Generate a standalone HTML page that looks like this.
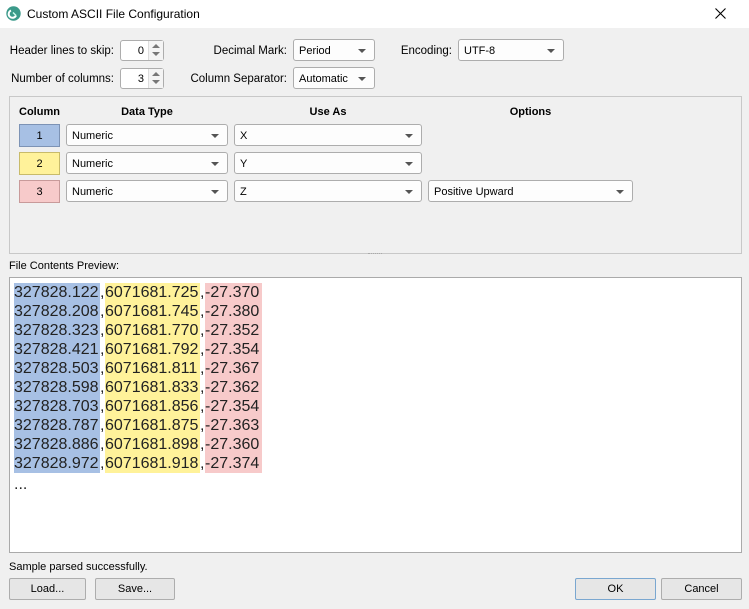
<!DOCTYPE html>
<html><head><meta charset="utf-8"><style>
*{box-sizing:border-box;margin:0;padding:0}
body{width:749px;height:609px;background:#f0f0f0;font-family:"Liberation Sans",sans-serif;font-size:11.5px;color:#000;position:relative;overflow:hidden}
.a{position:absolute}
.tb{left:0;top:0;width:749px;height:28px;background:#fff}
.lbl{position:absolute;white-space:nowrap;line-height:14px;font-size:11.5px}
.r{text-align:right}
.cb{position:absolute;height:22px;background:#fdfdfd;border:1px solid #adadad;border-radius:3px;padding-left:5px;line-height:22px;font-size:11px}
.cb:after{content:"";position:absolute;right:8px;top:9px;border-left:4px solid transparent;border-right:4px solid transparent;border-top:4px solid #555}
.sp{position:absolute;width:44px;height:21px;background:#fff;border:1px solid #adadad;border-radius:3px;text-align:right;padding-right:19px;line-height:20px;font-size:11px}
.sp i{position:absolute;right:0;top:0;width:15px;height:19px;border-left:1px solid #ddd;background:#f4f4f4}
.sp i:before{content:"";position:absolute;left:3px;top:3px;border-left:4px solid transparent;border-right:4px solid transparent;border-bottom:4px solid #777}
.sp i:after{content:"";position:absolute;left:3px;top:11px;border-left:4px solid transparent;border-right:4px solid transparent;border-top:4px solid #777}
.sw{position:absolute;left:19px;width:41px;height:23px;text-align:center;line-height:22px;font-size:11px}
.h{position:absolute;top:106px;font-weight:bold;font-size:11px;text-align:center}
.btn{position:absolute;top:578px;height:22px;background:#e6e6e6;border:1px solid #adadad;border-radius:2px;text-align:center;line-height:21px;font-size:11px}
.pv{font-size:16px;line-height:19px;color:#222;white-space:nowrap}
.pv span{display:inline-block}
.b{background:#a7c0e4;width:86px}
.y{background:#fff29a;width:95px}
.p{background:#f7caca;width:57px}
.c{width:5px}
</style></head><body>
<div class="a tb"></div>
<svg class="a" style="left:6px;top:6px" width="15" height="15" viewBox="0 0 15 15"><circle cx="7.5" cy="7.5" r="7.2" fill="#3b9a8a"/><path d="M5 4.5a3.8 3.8 0 1 0 5 5" stroke="#fff" stroke-width="2" fill="none"/><path d="M7 6.5l3 3" stroke="#cfe" stroke-width="1.4"/></svg>
<div class="lbl" style="left:27px;top:7px;font-size:12px">Custom ASCII File Configuration</div>
<svg class="a" style="left:715px;top:8px" width="11" height="11"><path d="M0.5 0.5l10 10M10.5 0.5l-10 10" stroke="#000" stroke-width="1.1"/></svg>

<div class="lbl r" style="right:635px;top:44px">Header lines to skip:</div>
<div class="sp" style="left:120px;top:40px">0<i></i></div>
<div class="lbl r" style="right:635px;top:72px">Number of columns:</div>
<div class="sp" style="left:120px;top:68px">3<i></i></div>
<div class="lbl r" style="right:462px;top:44px">Decimal Mark:</div>
<div class="cb" style="left:293px;top:39px;width:82px">Period</div>
<div class="lbl r" style="right:462px;top:72px">Column Separator:</div>
<div class="cb" style="left:293px;top:67px;width:82px">Automatic</div>
<div class="lbl r" style="right:297px;top:44px">Encoding:</div>
<div class="cb" style="left:458px;top:39px;width:106px">UTF-8</div>

<div class="a" style="left:9px;top:96px;width:733px;height:158px;border:1px solid #c8c8c8;background:#f0f0f0"></div>
<div class="h" style="left:14px;width:51px">Column</div>
<div class="h" style="left:66px;width:162px">Data Type</div>
<div class="h" style="left:234px;width:188px">Use As</div>
<div class="h" style="left:428px;width:205px">Options</div>

<div class="sw" style="top:124px;background:#a7c0e4;border:1px solid #7d93b5">1</div>
<div class="cb" style="left:66px;top:124px;width:162px">Numeric</div>
<div class="cb" style="left:234px;top:124px;width:188px">X</div>
<div class="sw" style="top:152px;background:#fff29a;border:1px solid #c8bb6a">2</div>
<div class="cb" style="left:66px;top:152px;width:162px">Numeric</div>
<div class="cb" style="left:234px;top:152px;width:188px">Y</div>
<div class="sw" style="top:180px;background:#f7caca;border:1px solid #c89a9a">3</div>
<div class="cb" style="left:66px;top:180px;width:162px">Numeric</div>
<div class="cb" style="left:234px;top:180px;width:188px">Z</div>
<div class="cb" style="left:428px;top:180px;width:205px">Positive Upward</div>
<div class="a" style="left:368px;top:253px;width:14px;height:1px;border-top:1px dotted #aaa"></div>

<div class="lbl" style="left:9px;top:259px;font-size:11px">File Contents Preview:</div>
<div class="a" style="left:9px;top:277px;width:733px;height:276px;background:#fff;border:1px solid #aaa"></div>
<div class="a pv" style="left:14px;top:283px">
<div><span class="b">327828.122</span><span class="c">,</span><span class="y">6071681.725</span><span class="c">,</span><span class="p">-27.370</span></div>
<div><span class="b">327828.208</span><span class="c">,</span><span class="y">6071681.745</span><span class="c">,</span><span class="p">-27.380</span></div>
<div><span class="b">327828.323</span><span class="c">,</span><span class="y">6071681.770</span><span class="c">,</span><span class="p">-27.352</span></div>
<div><span class="b">327828.421</span><span class="c">,</span><span class="y">6071681.792</span><span class="c">,</span><span class="p">-27.354</span></div>
<div><span class="b">327828.503</span><span class="c">,</span><span class="y">6071681.811</span><span class="c">,</span><span class="p">-27.367</span></div>
<div><span class="b">327828.598</span><span class="c">,</span><span class="y">6071681.833</span><span class="c">,</span><span class="p">-27.362</span></div>
<div><span class="b">327828.703</span><span class="c">,</span><span class="y">6071681.856</span><span class="c">,</span><span class="p">-27.354</span></div>
<div><span class="b">327828.787</span><span class="c">,</span><span class="y">6071681.875</span><span class="c">,</span><span class="p">-27.363</span></div>
<div><span class="b">327828.886</span><span class="c">,</span><span class="y">6071681.898</span><span class="c">,</span><span class="p">-27.360</span></div>
<div><span class="b">327828.972</span><span class="c">,</span><span class="y">6071681.918</span><span class="c">,</span><span class="p">-27.374</span></div>
<div style="margin-top:2px">...</div>
</div>

<div class="lbl" style="left:9px;top:560px;font-size:11px">Sample parsed successfully.</div>
<div class="btn" style="left:9px;width:77px">Load...</div>
<div class="btn" style="left:95px;width:80px">Save...</div>
<div class="btn" style="left:575px;width:81px;border-color:#7aa7d0">OK</div>
<div class="btn" style="left:661px;width:81px">Cancel</div>
</body></html>
